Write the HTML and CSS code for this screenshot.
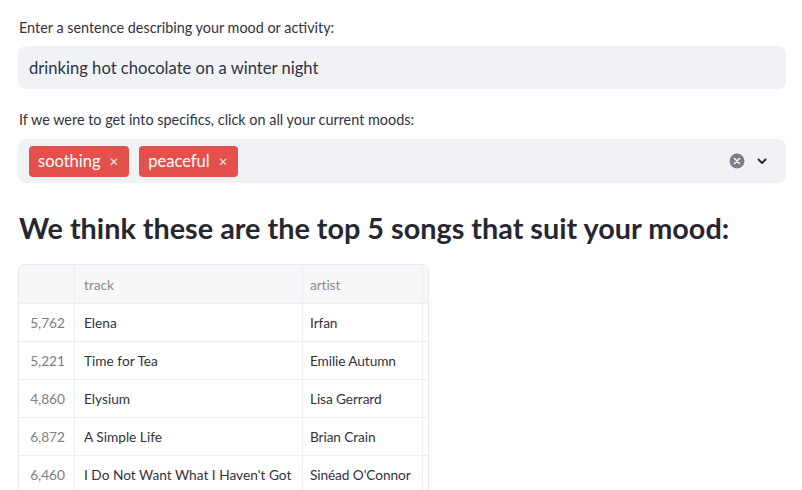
FILE: index.html
```html
<!DOCTYPE html>
<html>
<head>
<meta charset="utf-8">
<link rel="stylesheet" href="styles.css">
</head>
<body>
<main class="app">
  <div class="field">
    <label class="label">Enter a sentence describing your mood or activity:</label>
    <div class="input">drinking hot chocolate on a winter night</div>
  </div>
  <div class="field field2">
    <label class="label">If we were to get into specifics, click on all your current moods:</label>
    <div class="select">
      <div class="tags">
        <span class="tag">soothing <span class="x">×</span></span>
        <span class="tag">peaceful <span class="x">×</span></span>
      </div>
      <div class="controls">
        <svg class="clear" width="16" height="16" viewBox="0 0 16 16"><circle cx="8" cy="8" r="7.5" fill="#7e7e88"/><path d="M5.5 5.5l5 5M10.5 5.5l-5 5" stroke="#f0f2f6" stroke-width="1.6" stroke-linecap="round"/></svg>
        <svg class="chev" width="12" height="12" viewBox="0 0 12 12"><path d="M2.5 4.5L6 8l3.5-3.5" fill="none" stroke="#262730" stroke-width="1.8" stroke-linecap="round" stroke-linejoin="round"/></svg>
      </div>
    </div>
  </div>
  <h2 class="heading">We think these are the top 5 songs that suit your mood:</h2>
  <div class="table">
    <div class="row head"><div class="c idx"></div><div class="c track">track</div><div class="c artist">artist</div></div>
    <div class="row"><div class="c idx">5,762</div><div class="c track">Elena</div><div class="c artist">Irfan</div></div>
    <div class="row"><div class="c idx">5,221</div><div class="c track">Time for Tea</div><div class="c artist">Emilie Autumn</div></div>
    <div class="row"><div class="c idx">4,860</div><div class="c track">Elysium</div><div class="c artist">Lisa Gerrard</div></div>
    <div class="row"><div class="c idx">6,872</div><div class="c track">A Simple Life</div><div class="c artist">Brian Crain</div></div>
    <div class="row"><div class="c idx">6,460</div><div class="c track">I Do Not Want What I Haven't Got</div><div class="c artist">Sinéad O'Connor</div></div>
  </div>
</main>
</body>
</html>
```
FILE: styles.css
```css
html, body { margin: 0; padding: 0; background: #fff; }
body { font-family: "Lato", "Liberation Sans", sans-serif; color: #31333f; overflow: hidden; height: 490px; }
.app { padding: 18px 16px 0 18px; }
.field { display: flex; flex-direction: column; }
.label { font-size: 14.4px; color: #31333f; margin-left: 1px; line-height: 20px; }
.input { margin-top: 8px; height: 43px; background: #f0f2f6; border-radius: 8px; padding: 0 11px; display: flex; align-items: center; font-size: 16.6px; color: #31333f; }
.field2 { margin-top: 21px; }
.select { margin-top: 9px; height: 44px; background: #f0f2f6; border-radius: 8px; display: flex; align-items: center; justify-content: space-between; padding: 0 18px 0 11px; }
.tags { display: flex; gap: 10px; }
.tag { background: #e4504c; color: #fff; font-size: 16.5px; border-radius: 4px; height: 31px; display: flex; align-items: center; padding: 0 11px 0 9px; gap: 9px; }
.x { font-size: 15px; opacity: 0.9; }
.controls { display: flex; align-items: center; gap: 11px; }
.heading { font-size: 28.8px; font-weight: 700; color: #262730; margin: 25px 0 0 1px; line-height: 40px; }
.table { margin-top: 16px; width: 409px; border: 1px solid #e8eaef; border-radius: 6px; overflow: hidden; }
.row { display: flex; height: 37px; border-bottom: 1px solid #eceef2; }
.row.head { background: #f7f8fa; height: 38px; }
.c { display: flex; align-items: center; padding: 0 9px; font-size: 13.7px; color: #31333f; border-right: 1px solid #eceef2; white-space: nowrap; overflow: hidden; box-sizing: border-box; }
.idx { width: 56px; justify-content: flex-end; color: #7c7e86; }
.track { width: 228px; }
.artist { width: 120px; padding: 0 0 0 7px; letter-spacing: -0.1px; }
.head .c { color: #8a8c94; }
```
